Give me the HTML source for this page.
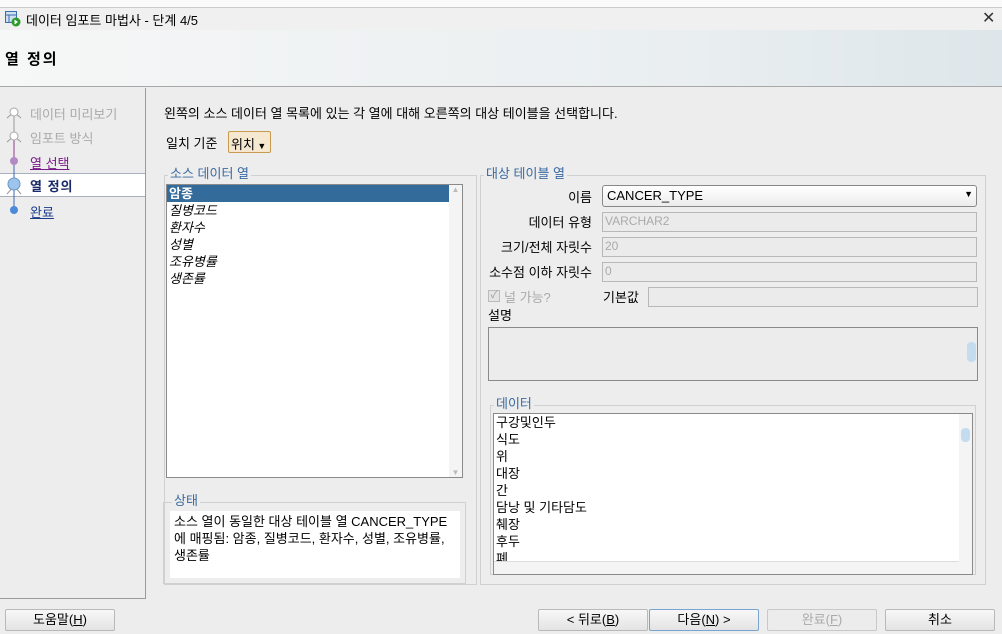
<!DOCTYPE html>
<html><head><meta charset="utf-8"><style>
*{box-sizing:border-box;margin:0;padding:0}
body{width:1002px;height:634px;overflow:hidden;background:#ededed;font-family:"Liberation Sans","Noto Sans CJK KR",sans-serif;font-size:13px;color:#000;position:relative}
.a{position:absolute}
.lbl{position:absolute;text-align:right;width:200px;left:392px;font-size:13px}
.inp{position:absolute;left:602px;width:375px;height:20px;border:1px solid #b8b8b8;background:#ebebeb;color:#aaa;padding:1px 2px;font-size:12px}
.fs{position:absolute;border:1px solid #d0d0d0}
.lg{position:absolute;background:#ededed;color:#3a6aa0;padding:0 2px;font-size:13px;line-height:15px}
.btn{position:absolute;top:609px;height:22px;width:110px;border:1px solid #b9b9b9;border-radius:2px;background:linear-gradient(#f8f8f8,#e4e4e4);text-align:center;line-height:20px;font-size:13px}
.row{height:17px;line-height:17px;padding-left:2px;white-space:nowrap}
</style></head><body>
<div class="a" style="left:0;top:0;width:1002px;height:8px;background:#fafafa;border-bottom:1px solid #ccc"></div>
<div class="a" style="left:0;top:8px;width:1002px;height:22px;background:#f0f0f0"></div>
<svg class="a" style="left:5px;top:11px" width="16" height="16"><rect x="0.5" y="0.5" width="11" height="11" fill="#cfe0f2" stroke="#3a6ea8"/><line x1="0" y1="4" x2="12" y2="4" stroke="#3a6ea8"/><line x1="4" y1="4" x2="4" y2="12" stroke="#3a6ea8"/><circle cx="11" cy="11" r="4.5" fill="#2c9a2c"/><path d="M9.5 8.5 L13 11 L9.5 13.5Z" fill="#fff"/></svg>
<div class="a" style="left:26px;top:10px">데이터 임포트 마법사 - 단계 4/5</div>
<div class="a" style="left:982px;top:8px;font-size:16px;color:#333">✕</div>
<div class="a" style="left:0;top:30px;width:1002px;height:57px;background:linear-gradient(90deg,#f6f7f7,#e9eef0 70%,#dde6ea);border-bottom:1px solid #a8a8a8"></div>
<div class="a" style="left:5px;top:48px;font-size:15px;font-weight:bold;letter-spacing:2px">열 정의</div>
<div class="a" style="left:0;top:88px;width:146px;height:511px;border-right:1px solid #9a9a9a;border-bottom:1px solid #9a9a9a"></div>
<div class="a" style="left:0;top:173px;width:145px;height:24px;background:#fff;border-top:1px solid #a8b0c0;border-bottom:1px solid #a8b0c0"></div>
<svg class="a" style="left:4px;top:104px" width="22" height="112">
<line x1="10" y1="8" x2="10" y2="32" stroke="#999"/><line x1="10" y1="32" x2="10" y2="57" stroke="#8a3a8a"/><line x1="10" y1="57" x2="10" y2="107" stroke="#3a6ab0"/>
<path d="M3 14 L10 8 L17 14 M3 38 L10 32 L17 38 M3 90 L10 82 L17 90" stroke="#999" fill="none"/>
<circle cx="10" cy="8" r="4" fill="#fff" stroke="#aaa"/><circle cx="10" cy="32" r="4" fill="#fff" stroke="#aaa"/>
<circle cx="10" cy="57" r="4" fill="#b48ac4"/><circle cx="10" cy="80" r="6" fill="#9cc4ec" stroke="#6a98c8"/><circle cx="10" cy="106" r="4" fill="#4a8ad8"/></svg>
<div class="a" style="left:30px;top:104px;color:#aaa">데이터 미리보기</div>
<div class="a" style="left:30px;top:128px;color:#aaa">임포트 방식</div>
<div class="a" style="left:30px;top:153px;color:#7a1a8a;text-decoration:underline">열 선택</div>
<div class="a" style="left:30px;top:176px;color:#1a2a6a;font-weight:bold;letter-spacing:1px">열 정의</div>
<div class="a" style="left:30px;top:202px;color:#1a3a8a;text-decoration:underline">완료</div>
<div class="a" style="left:164px;top:103px">왼쪽의 소스 데이터 열 목록에 있는 각 열에 대해 오른쪽의 대상 테이블을 선택합니다.</div>
<div class="a" style="left:166px;top:133px">일치 기준</div>
<div class="a" style="left:228px;top:131px;width:43px;height:22px;border:1px solid #c89a50;border-radius:2px;background:#f6e8d0;padding:2px 2px">위치<span style="font-size:9px"> ▼</span></div>
<div class="fs" style="left:164px;top:175px;width:313px;height:410px"></div>
<div class="lg" style="left:168px;top:166px">소스 데이터 열</div>
<div class="a" style="left:166px;top:184px;width:297px;height:294px;border:1px solid #8a8a8a;background:#fff;font-style:italic">
<div class="row" style="background:#336b9b;color:#fff;font-weight:bold;font-style:normal;width:283px">암종</div>
<div class="row">질병코드</div><div class="row">환자수</div><div class="row">성별</div><div class="row">조유병률</div><div class="row">생존률</div>
<div class="a" style="right:0;top:0;width:13px;height:292px;background:#f4f4f4;color:#bbb;font-size:8px;text-align:center;font-style:normal">▲<div style="position:absolute;bottom:0;width:13px">▼</div></div></div>
<div class="fs" style="left:163px;top:502px;width:303px;height:82px"></div>
<div class="lg" style="left:172px;top:493px">상태</div>
<div class="a" style="left:170px;top:511px;width:290px;height:67px;background:#fff;padding:2px 4px;line-height:17px;word-break:break-all">소스 열이 동일한 대상 테이블 열 CANCER_TYPE에 매핑됨: 암종, 질병코드, 환자수, 성별, 조유병률, 생존률</div>
<div class="fs" style="left:480px;top:175px;width:506px;height:410px"></div>
<div class="lg" style="left:484px;top:166px">대상 테이블 열</div>
<div class="lbl" style="top:187px">이름</div>
<div class="a" style="left:602px;top:185px;width:375px;height:22px;border:1px solid #888;border-radius:3px;background:linear-gradient(#fff,#ececec);padding:2px 4px">CANCER_TYPE<span style="position:absolute;right:3px;top:3px;font-size:9px">▼</span></div>
<div class="lbl" style="top:212px">데이터 유형</div><div class="inp" style="top:212px">VARCHAR2</div>
<div class="lbl" style="top:237px">크기/전체 자릿수</div><div class="inp" style="top:237px">20</div>
<div class="lbl" style="top:262px">소수점 이하 자릿수</div><div class="inp" style="top:262px">0</div>
<div class="a" style="left:488px;top:290px;width:12px;height:12px;border:1px solid #bbb;background:#e4e4e4;font-size:10px;line-height:10px;color:#999;text-align:center">✓</div>
<div class="a" style="left:504px;top:287px;color:#aaa">널 가능?</div>
<div class="a" style="left:603px;top:287px">기본값</div>
<div class="inp" style="left:648px;width:330px;top:287px"></div>
<div class="a" style="left:488px;top:305px">설명</div>
<div class="a" style="left:488px;top:327px;width:490px;height:54px;border:1px solid #8a8a8a;background:#ececec"><div class="a" style="right:1px;top:14px;width:9px;height:20px;border-radius:4px;background:#c4dcf0"></div></div>
<div class="fs" style="left:490px;top:405px;width:486px;height:170px"></div>
<div class="lg" style="left:494px;top:396px">데이터</div>
<div class="a" style="left:493px;top:413px;width:480px;height:162px;border:1px solid #8a8a8a;background:#fff;overflow:hidden">
<div class="row">구강및인두</div><div class="row">식도</div><div class="row">위</div><div class="row">대장</div><div class="row">간</div><div class="row">담낭 및 기타담도</div><div class="row">췌장</div><div class="row">후두</div><div class="row">폐</div>
<div class="a" style="left:0;bottom:0;width:478px;height:13px;background:#f4f4f4;border-top:1px solid #ddd"></div>
<div class="a" style="right:0;top:0;width:13px;height:148px;background:#f4f4f4"><div class="a" style="left:2px;top:14px;width:9px;height:14px;border-radius:4px;background:#c4dcf0"></div></div></div>
<div class="btn" style="left:5px">도움말(<u>H</u>)</div>
<div class="btn" style="left:538px">&lt; 뒤로(<u>B</u>)</div>
<div class="btn" style="left:649px;border-color:#7aa4d0">다음(<u>N</u>) &gt;</div>
<div class="btn" style="left:767px;background:#ececec;color:#aaa;border-color:#c8c8c8">완료(<u>F</u>)</div>
<div class="btn" style="left:885px">취소</div>
</body></html>
